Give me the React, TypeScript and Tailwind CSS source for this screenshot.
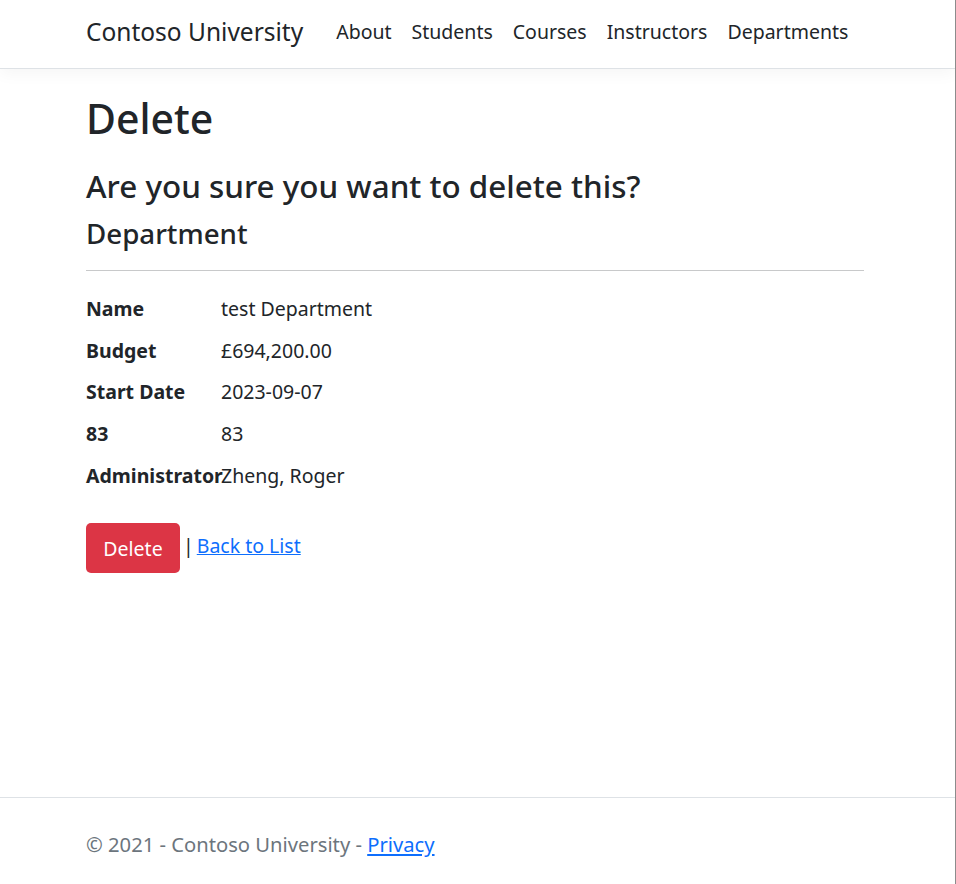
const navLinks = ['About', 'Students', 'Courses', 'Instructors', 'Departments'];

const details = [
  { label: 'Name', value: 'test Department' },
  { label: 'Budget', value: '£694,200.00' },
  { label: 'Start Date', value: '2023-09-07' },
  { label: '83', value: '83' },
  { label: 'Administrator', value: 'Zheng, Roger' },
];

export default function App() {
  return (
    <div
      className="h-[884px] flex flex-col bg-white text-[#212529] border-r border-[#8c8c8c] overflow-hidden"
      style={{ fontFamily: '"Noto Sans", "Open Sans", sans-serif' }}
    >
      <header className="h-[69px] shrink-0 bg-white border-b border-[#dee2e6] shadow-[0_5px_15px_rgba(0,0,0,0.04)] relative z-10">
        <nav className="w-[778px] ml-[86px] h-full flex items-center pb-[4px]">
          <a className="shrink-0 whitespace-nowrap text-[24.5px] mr-[23px] text-[#212529]">Contoso University</a>
          <ul className="flex items-center whitespace-nowrap">
            {navLinks.map((l) => (
              <li key={l}>
                <a className="block px-[10px] text-[19.5px] text-[#212529]">{l}</a>
              </li>
            ))}
          </ul>
        </nav>
      </header>

      <main className="flex-1 w-[778px] ml-[86px] pt-[23px]">
        <h1 className="text-[41px] font-medium leading-[52px] mb-[20px]">Delete</h1>
        <h2 className="text-[31.4px] font-medium leading-[43px] mb-[9px]">Are you sure you want to delete this?</h2>
        <div>
          <h4 className="text-[27.7px] font-medium leading-[35px]">Department</h4>
          <hr className="mt-[19px] mb-[22px] border-0 border-t border-[#c8c9ca]" />
          <dl className="text-[19.5px] leading-[31px] mb-[32px]">
            {details.map((d) => (
              <div key={d.label} className="flex mb-[10.7px]">
                <dt className="w-[135px] shrink-0 font-bold whitespace-nowrap">{d.label}</dt>
                <dd>{d.value}</dd>
              </div>
            ))}
          </dl>
          <form className="flex items-center text-[19.5px]">
            <button
              type="button"
              className="w-[94px] h-[50px] rounded-[5px] bg-[#dc3545] text-white text-[19.5px] pt-[2px]"
            >
              Delete
            </button>
            <span className="ml-[3px] mr-[3px] -mt-[5px]">|</span>
            <a className="text-[#0d6efd] underline -mt-[5px]">Back to List</a>
          </form>
        </div>
      </main>

      <footer className="h-[87px] shrink-0 border-t border-[#dee2e6] text-[#6c757d] text-[20.2px]">
        <div className="w-[778px] ml-[86px] pt-[31px] leading-[30px]">
          © 2021 - Contoso University - <a className="text-[#0d6efd] underline">Privacy</a>
        </div>
      </footer>
    </div>
  );
}
